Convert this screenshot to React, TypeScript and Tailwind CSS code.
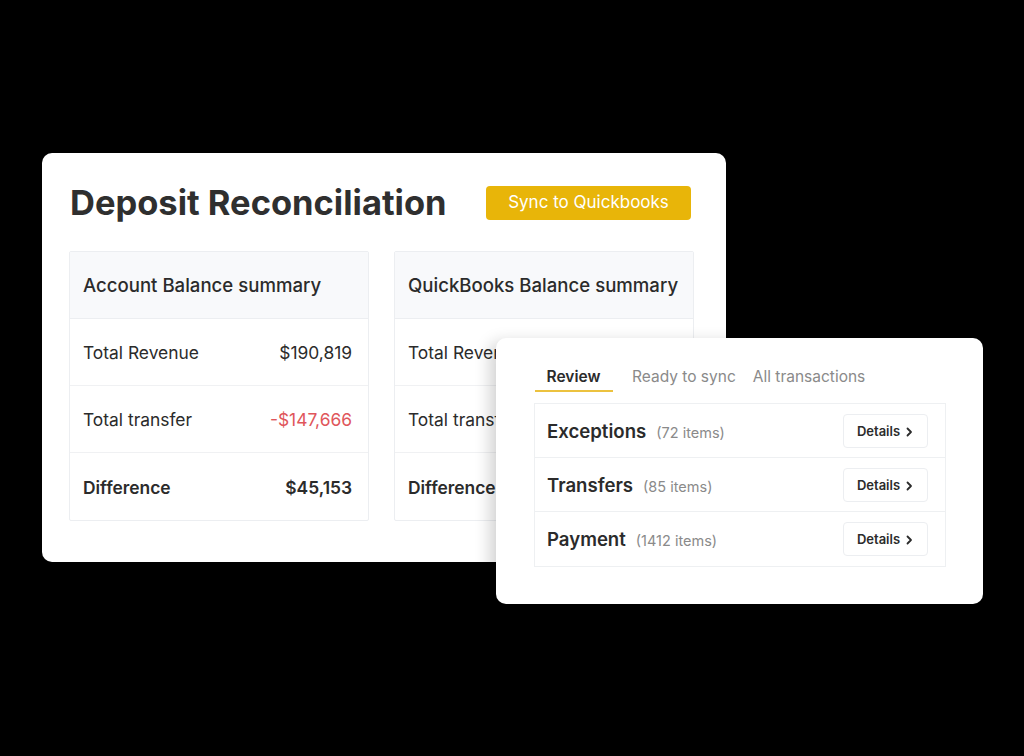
import React from 'react';

const rows = [
  { label: 'Total Revenue', value: '$190,819', tone: 'normal' },
  { label: 'Total transfer', value: '-$147,666', tone: 'neg' },
  { label: 'Difference', value: '$45,153', tone: 'bold' },
];

const SummaryTable = ({ title }: { title: string }) => (
  <div className="w-[300px] border border-[#eceef1] rounded-[2px] overflow-hidden">
    <div className="h-[67px] bg-[#f8f9fb] flex items-center pl-[13px] pt-[2px] text-[18.6px] font-medium text-[#2b2b2b] border-b border-[#eceef1]">
      {title}
    </div>
    {rows.map((r, i) => (
      <div
        key={r.label}
        className={
          'h-[67px] flex items-center justify-between pl-[13px] pr-[16px] pt-[3px] text-[17.4px] text-[#2b2b2b] ' +
          (i < rows.length - 1 ? 'border-b border-[#f0f1f3]' : '')
        }
      >
        <span className={r.tone === 'bold' ? 'font-semibold' : ''}>{r.label}</span>
        <span
          className={
            r.tone === 'neg' ? 'text-[#e0565b]' : r.tone === 'bold' ? 'font-semibold' : ''
          }
        >
          {r.value}
        </span>
      </div>
    ))}
  </div>
);

const items = [
  { name: 'Exceptions', count: '(72 items)' },
  { name: 'Transfers', count: '(85 items)' },
  { name: 'Payment', count: '(1412 items)' },
];

export default function App() {
  return (
    <div
      className="relative w-[1024px] h-[756px] bg-black overflow-hidden"
      style={{ fontFamily: 'Inter, "Noto Sans", sans-serif' }}
    >
      <div className="absolute left-[42px] top-[153px] w-[684px] h-[409px] bg-white rounded-[10px] pt-[30px] px-[27px]">
        <div className="flex items-center justify-between">
          <h1 className="text-[34.5px] font-bold text-[#2f2f2f] leading-[40px] ml-[1px]">
            Deposit Reconciliation
          </h1>
          <button className="mr-[8px] h-[34px] w-[205px] bg-[#e8b509] rounded-[4px] text-white text-[17px] font-normal">
            Sync to Quickbooks
          </button>
        </div>
        <div className="mt-[28px] flex gap-[25px]">
          <SummaryTable title="Account Balance summary" />
          <SummaryTable title="QuickBooks Balance summary" />
        </div>
      </div>

      <div className="absolute left-[496px] top-[338px] w-[487px] h-[266px] bg-white rounded-[10px] shadow-[-6px_4px_16px_rgba(0,0,0,0.18)] pt-[24px] px-[38px]">
        <div className="flex items-end text-[15.5px] h-[26px]">
          <div className="relative w-[79px] text-center font-semibold text-[#2b2b2b]">
            Review
            <div className="absolute left-[1px] right-0 -bottom-[4px] h-[2px] bg-[#ecc23f]" />
          </div>
          <div className="ml-[19px] text-[#8a8a8a]">Ready to sync</div>
          <div className="ml-[17px] text-[#8a8a8a]">All transactions</div>
        </div>
        <div className="mt-[15px] w-[412px] border border-[#eef0f2]">
          {items.map((it, i) => (
            <div
              key={it.name}
              className={
                'h-[54px] flex items-center justify-between pl-[12px] pr-[17px] ' +
                (i < items.length - 1 ? 'border-b border-[#eef0f2]' : '')
              }
            >
              <div className="flex items-baseline gap-[10px] pt-[2px]">
                <span className="text-[18.6px] font-semibold text-[#2b2b2b]">{it.name}</span>
                <span className="text-[14.5px] text-[#8a8a8a]">{it.count}</span>
              </div>
              <button className="w-[85px] h-[34px] border border-[#eceef1] rounded-[4px] flex items-center justify-center gap-[4px] pt-[2px] text-[13px] font-semibold text-[#2b2b2b]">
                Details
                <svg width="10" height="10" viewBox="0 0 10 10" fill="none">
                  <path d="M3.5 1.5 7 5 3.5 8.5" stroke="#2b2b2b" strokeWidth="1.8" strokeLinecap="round" strokeLinejoin="round" />
                </svg>
              </button>
            </div>
          ))}
        </div>
      </div>
    </div>
  );
}
